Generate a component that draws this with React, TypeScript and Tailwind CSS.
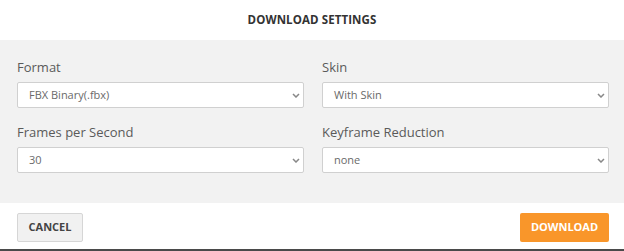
import React from "react";

function Chevron() {
  return (
    <svg width="8" height="5" viewBox="0 0 8 5" className="shrink-0">
      <path d="M1 1 L4 4 L7 1" fill="none" stroke="#888" strokeWidth="1.5" />
    </svg>
  );
}

function Field({ label, value, className = "" }: { label: string; value: string; className?: string }) {
  return (
    <div className={"flex flex-col " + className}>
      <div className="h-[18px] leading-[18px] text-[13px] text-[#5a5a5a]">{label}</div>
      <div className="mt-[6px] h-[26px] bg-white border border-[#d0d0d0] rounded-[2px] flex items-center justify-between pl-[11px] pr-[3px]">
        <span className="text-[11px] text-[#6a6a6a]">{value}</span>
        <Chevron />
      </div>
    </div>
  );
}

export default function App() {
  return (
    <div className="w-[624px] h-[251px] bg-white flex flex-col font-['Open_Sans',sans-serif]">
      <div className="h-[40px] flex items-center justify-center">
        <span className="text-[11.5px] font-bold text-[#333] tracking-[0.1px]">DOWNLOAD SETTINGS</span>
      </div>
      <div className="h-[163px] bg-[#f2f2f2] pt-[18px] pl-[17px] pr-[15px] grid grid-cols-2 gap-x-[18px] content-start">
        <Field label="Format" value="FBX Binary(.fbx)" />
        <Field label="Skin" value="With Skin" />
        <Field label="Frames per Second" value="30" className="mt-[15px]" />
        <Field label="Keyframe Reduction" value="none" className="mt-[15px]" />
      </div>
      <div className="h-[46px] flex justify-between items-start pt-[10px] pl-[17px] pr-[15px]">
        <button className="w-[66px] h-[29px] bg-[#f1f1f1] border border-[#d6d6d6] rounded-[2px] text-[11px] font-bold text-[#444]">
          CANCEL
        </button>
        <button className="w-[89px] h-[29px] bg-[#f9962a] rounded-[2px] text-[11px] font-bold text-white">
          DOWNLOAD
        </button>
      </div>
      <div className="h-[2px] bg-[#4a4a4a]" />
    </div>
  );
}
